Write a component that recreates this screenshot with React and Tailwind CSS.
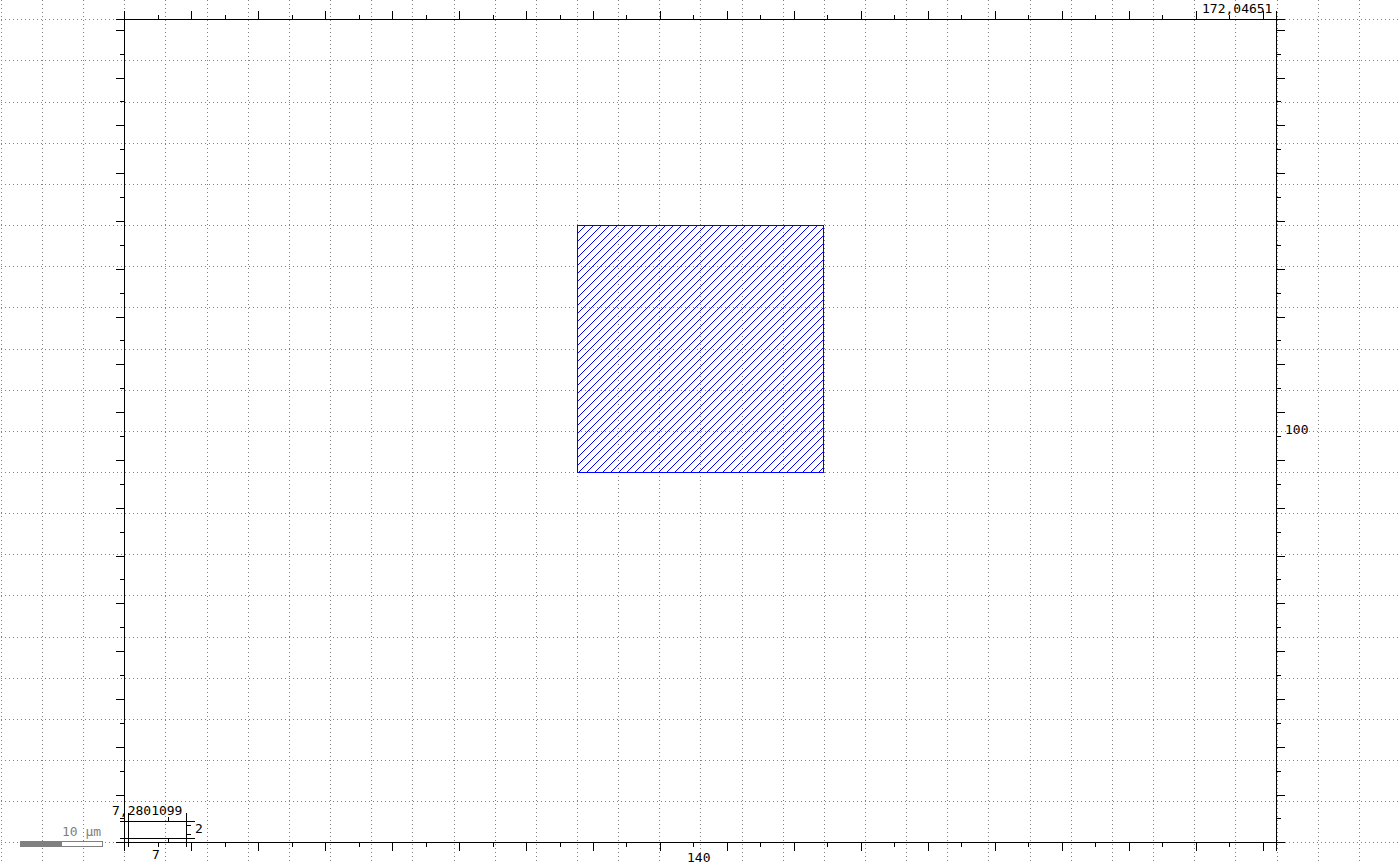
import React from 'react';

// layout canvas geometry (screen pixels)
const W = 1400;
const H = 864;
const GRID = 41.15;
const LEFT = 124;
const TOP = 19;
const RIGHT = 1276;
const BOTTOM = 842;
const TICK_X = 33.48;
const TICK_Y = 23.9;
const EXT = 8;

const INK = '#000000';
const GRID_COLOR = '#808080';
const LAYER = '#0000ff';

// crisp 1px horizontal / vertical segments on pixel rows / columns
const HLine = ({ row, from, to, color = INK }) => (
  <line x1={from} x2={to + 1} y1={row + 0.5} y2={row + 0.5} stroke={color} strokeWidth={1} />
);
const VLine = ({ col, from, to, color = INK }) => (
  <line x1={col + 0.5} x2={col + 0.5} y1={from} y2={to + 1} stroke={color} strokeWidth={1} />
);

const Grid = () => {
  const cols = [];
  for (let i = -3; i <= 31; i++) {
    const x = Math.round(LEFT + 0.3 + GRID * i);
    if (x >= 0 && x < W) cols.push(x);
  }
  const rows = [];
  for (let j = 0; j <= 20; j++) rows.push(Math.round(TOP + 0.3 + GRID * j));
  return (
    <g stroke={GRID_COLOR} strokeDasharray="1 3">
      {cols.map((x) => (
        <line key={'c' + x} x1={x + 0.5} x2={x + 0.5} y1={0} y2={H} />
      ))}
      {rows.map((y) => (
        <line key={'r' + y} x1={1} x2={W} y1={y + 0.5} y2={y + 0.5} />
      ))}
    </g>
  );
};

const Frame = () => {
  const ticks = [];
  for (let k = 1; k <= 34; k++) {
    const x = Math.round(LEFT + 0.3 + TICK_X * k);
    const len = k % 2 === 0 ? 8 : 4;
    ticks.push(<VLine key={'t' + k} col={x} from={TOP - len} to={TOP - 1} />);
    ticks.push(<VLine key={'b' + k} col={x} from={BOTTOM + 1} to={BOTTOM + len} />);
  }
  for (let m = 1; m <= 34; m++) {
    const y = Math.round(BOTTOM + 0.3 - TICK_Y * m);
    const len = m % 2 === 0 ? 8 : 4;
    ticks.push(<HLine key={'l' + m} row={y} from={LEFT - len} to={LEFT - 1} />);
    ticks.push(<HLine key={'r' + m} row={y} from={RIGHT + 1} to={RIGHT + len} />);
  }
  return (
    <g>
      <HLine row={TOP} from={LEFT - EXT} to={RIGHT + EXT} />
      <HLine row={BOTTOM} from={LEFT - EXT} to={RIGHT + EXT} />
      <VLine col={LEFT} from={TOP - EXT} to={BOTTOM + EXT} />
      <VLine col={RIGHT} from={TOP - EXT} to={BOTTOM + EXT} />
      {ticks}
    </g>
  );
};

// hatched box on the layer: 45° stipple, 8px period, 1px blue outline
const HatchedBox = ({ x0, y0, x1, y1 }) => {
  const d = [];
  for (let c = x0 - (y1 - y0) - 8; c <= x1; c += 8) {
    // one staircase diagonal going up-right from row y1
    for (let i = 0; i <= y1 - y0; i++) {
      const x = c + i;
      const y = y1 - i;
      if (x > x0 && x < x1 && y > y0 && y < y1) d.push(`M${x} ${y}h1v1h-1z`);
    }
  }
  return (
    <g>
      <path d={d.join('')} fill={LAYER} />
      <HLine row={y0} from={x0} to={x1} color={LAYER} />
      <HLine row={y1} from={x0} to={x1} color={LAYER} />
      <VLine col={x0} from={y0} to={y1} color={LAYER} />
      <VLine col={x1} from={y0} to={y1} color={LAYER} />
    </g>
  );
};

// small box ruler near the lower left corner
const MiniRuler = () => (
  <g>
    <HLine row={821} from={120} to={194} />
    <HLine row={838} from={120} to={194} />
    <VLine col={128} from={813} to={846} />
    <VLine col={186} from={813} to={846} />
    <VLine col={168} from={817} to={820} />
    <VLine col={168} from={839} to={841} />
    <HLine row={825} from={187} to={190} />
    <HLine row={834} from={187} to={190} />
  </g>
);

const ScaleBar = () => (
  <g>
    <rect x={20.5} y={841.5} width={82} height={5} fill="#ffffff" stroke={GRID_COLOR} />
    <rect x={20} y={841} width={42} height={6} fill={GRID_COLOR} />
  </g>
);

const Label = ({ x, y, children, color = INK }) => (
  <text x={x} y={y} fill={color} fontSize="13" fontFamily="'DejaVu Sans Mono', 'Liberation Mono', monospace">
    {children}
  </text>
);

export default function App() {
  return (
    <div className="w-[1400px] h-[864px] bg-white overflow-hidden">
      <svg width={W} height={H} viewBox={`0 0 ${W} ${H}`} shapeRendering="crispEdges" className="block">
        <Grid />
        <HatchedBox x0={577} y0={225} x1={823} y1={472} />
        <Frame />
        <MiniRuler />
        <ScaleBar />

        <Label x={1202} y={13}>172,04651</Label>
        <Label x={1285} y={434}>100</Label>
        <Label x={687} y={862}>140</Label>
        <Label x={112} y={815}>7,2801099</Label>
        <Label x={195} y={833}>2</Label>
        <Label x={152} y={859}>7</Label>
        <Label x={62} y={836} color={GRID_COLOR}>10 µm</Label>
      </svg>
    </div>
  );
}
